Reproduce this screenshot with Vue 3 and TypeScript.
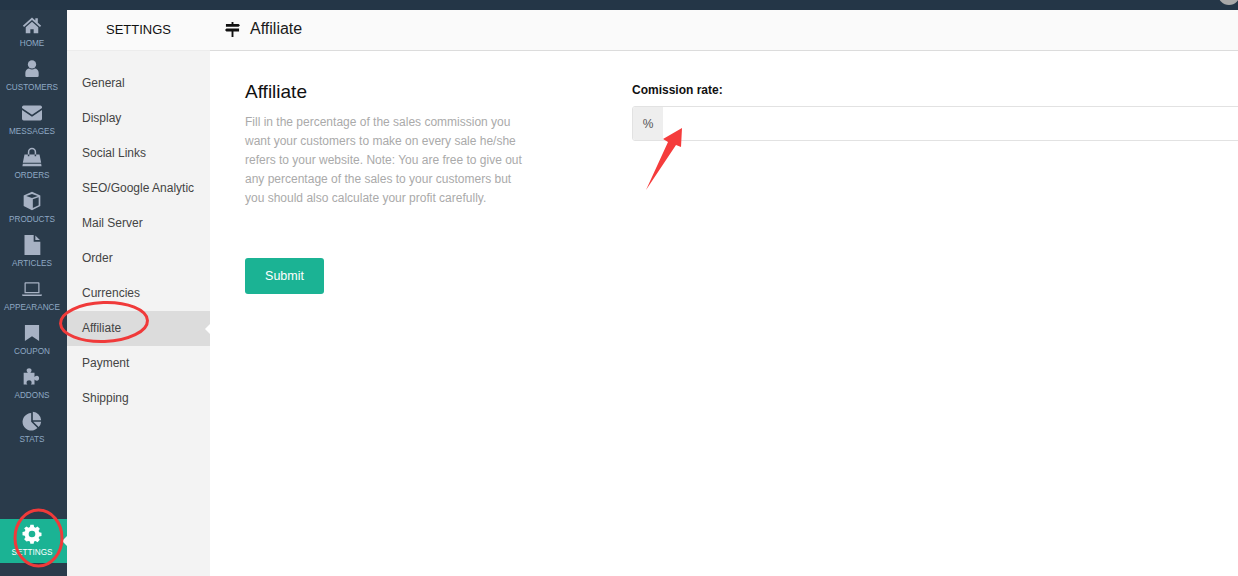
<template>
  <div class="page">
    <div class="topbar"><span class="avatar"></span></div>
    <div class="body">
      <nav class="rail">
        <a v-for="item in railItems" :key="item.label" class="rail-item">
          <svg class="rail-icon" viewBox="0 0 24 24" v-html="item.icon"></svg>
          <span>{{ item.label }}</span>
        </a>
        <a class="rail-item active">
          <svg class="rail-icon" viewBox="0 0 24 24">
            <path fill-rule="evenodd" d="M10 2h4l.5 2.700 1.800.8L18.600 4l2.800 2.800-1.500 2.300.8 1.800 2.700.5v4l-2.700.5-.8 1.800 1.500 2.300-2.800 2.800-2.300-1.500-1.800.8-.5 2.700h-4l-.5-2.700-1.800-.8L5.400 22l-2.800-2.800 1.500-2.300-.8-1.800-2.700-.5v-4l2.700-.5.8-1.800-1.500-2.300L5.400 4l2.300 1.500 1.800-.8zM12 9a4 4 0 1 0 0 8 4 4 0 0 0 0-8z" transform="translate(0 -1)" />
          </svg>
          <span>SETTINGS</span>
        </a>
      </nav>
      <aside class="submenu">
        <div class="submenu-title">SETTINGS</div>
        <ul>
          <li v-for="link in links" :key="link" :class="{ current: link === 'Affiliate' }">{{ link }}</li>
        </ul>
      </aside>
      <main class="content">
        <header class="content-head">
          <svg class="sign-icon" viewBox="0 0 16 16">
            <path d="M7 0h2v2h5.500L16 3.500 14.500 5H1V2h6zM1.500 7H15v3H9v6H7v-6H1.500L0 8.500z" />
          </svg>
          <h1>Affiliate</h1>
        </header>
        <section class="form">
          <div class="intro">
            <h2>Affiliate</h2>
            <p>Fill in the percentage of the sales commission you want your customers to make on every sale he/she refers to your website. Note: You are free to give out any percentage of the sales to your customers but you should also calculate your profit carefully.</p>
            <button type="button">Submit</button>
          </div>
          <div class="field">
            <label>Comission rate:</label>
            <div class="input-group">
              <span class="addon">%</span>
              <input type="text" />
            </div>
          </div>
        </section>
      </main>
    </div>
    <svg class="marks" width="1238" height="576" viewBox="0 0 1238 576">
      <ellipse cx="104" cy="322" rx="43.500" ry="19.500" transform="rotate(-2 104 322)" fill="none" stroke="#f03a3a" stroke-width="3" />
      <ellipse cx="38.500" cy="538" rx="23.500" ry="28" fill="none" stroke="#f03a3a" stroke-width="3" />
      <path d="M646 190 L668 142 L663 139 L682 128 L681 147 L676 145z" fill="#f53c3c" />
    </svg>
  </div>
</template>

<script setup lang="ts">
const railItems: { label: string; icon: string }[] = [
  { label: 'HOME', icon: '<path d="M12 3 1 13l1.500 1.500L12 6l9.500 8.500L23 13l-4-3.600V4h-3v2.700zM12 8l-7.500 6.700V22H10v-5h4v5h5.500v-7.300z"/>' },
  { label: 'CUSTOMERS', icon: '<circle cx="12" cy="6.500" r="5"/><path d="M4 20v-3.500c0-3 2.500-5 4.500-5 2.200 1.400 4.800 1.400 7 0 2 0 4.500 2 4.500 5V20a1.500 1.500 0 0 1-1.500 1.500h-13A1.500 1.500 0 0 1 4 20z"/>' },
  { label: 'MESSAGES', icon: '<path d="M2 3h20a2 2 0 0 1 2 2v1L12 14 0 6V5a2 2 0 0 1 2-2zM0 8.500 12 16.500 24 8.500V19a2 2 0 0 1-2 2H2a2 2 0 0 1-2-2z"/>' },
  { label: 'ORDERS', icon: '<path d="M7 9V6a5 5 0 0 1 10 0v3h-1.800V6a3.200 3.200 0 0 0-6.400 0v3zM3 9h4v2h1.800V9h6.400v2H17V9h4l2 10H1zM1 20h22l.5 3H.5z"/>' },
  { label: 'PRODUCTS', icon: '<path fill-rule="evenodd" d="M12 1 22 5.500V18l-10 5-10-5V5.500zM12 3.500 5 6l7 2.500L19 6zM13 10v10.500l7-3.500V7.500z"/>' },
  { label: 'ARTICLES', icon: '<path d="M3 0h11v8h8v16H3zM16 .5 21.500 6H16z"/>' },
  { label: 'APPEARANCE', icon: '<path fill-rule="evenodd" d="M4 4h16a1 1 0 0 1 1 1v12H3V5a1 1 0 0 1 1-1zM4.500 5.500v10h15v-10zM0 18.500h24v.5a1.500 1.500 0 0 1-1.500 1.500h-21A1.500 1.500 0 0 1 0 19z"/>' },
  { label: 'COUPON', icon: '<path d="M3.500 2.500h17v19L12 16l-8.500 5.500z"/>' },
  { label: 'ADDONS', icon: '<path d="M2 7h5c-1-1-1.500-2-1.500-3C5.500 2.500 7 1.500 8.500 1.500S11.500 2.500 11.500 4c0 1-.5 2-1.500 3h5v5c1-1 2-1.500 3-1.500 1.500 0 2.500 1.500 2.500 3s-1 3-2.500 3c-1 0-2-.5-3-1.500v6h-4.500c1-1 1-2 1-2.500 0-1.500-1.300-2.500-3-2.500s-3 1-3 2.500c0 .5 0 1.500 1 2.500H2z"/>' },
  { label: 'STATS', icon: '<path d="M11 2.500V13l7.500 7.500A10.500 10.500 0 1 1 11 2.500zM13 1a10.500 10.500 0 0 1 10 10H13zM13.500 13H23a10.500 10.500 0 0 1-3 6.300z"/>' }
]

const links: string[] = [
  'General',
  'Display',
  'Social Links',
  'SEO/Google Analytic',
  'Mail Server',
  'Order',
  'Currencies',
  'Affiliate',
  'Payment',
  'Shipping'
]
</script>

<style>
html, body { margin: 0; background: #fff; overflow: hidden; }
</style>

<style scoped>
.page {
  position: relative;
  width: 1238px;
  height: 576px;
  overflow: hidden;
  font-family: "Liberation Sans", Arial, sans-serif;
}

.topbar {
  position: relative;
  height: 10px;
  background: #243647;
}

.avatar {
  position: absolute;
  left: 1218px;
  top: -17px;
  width: 22px;
  height: 22px;
  border-radius: 50%;
  background: #a9a9a9;
}

.body {
  display: flex;
  height: 566px;
}

.rail {
  width: 67px;
  flex: none;
  display: flex;
  flex-direction: column;
  background: #2a3b4b;
}

.rail-item {
  height: 44px;
  flex: none;
  display: flex;
  flex-direction: column;
  align-items: center;
  padding: 5px 3px 0 0;
  box-sizing: border-box;
  color: #8fa9c4;
  font-size: 8.200px;
  line-height: 10px;
  white-space: nowrap;
}

.rail-icon {
  width: 20px;
  height: 20px;
  margin-bottom: 4px;
  flex: none;
  fill: #a7b2c4;
}

.rail-item.active {
  position: relative;
  margin-top: auto;
  margin-bottom: 13px;
  background: #1bb394;
  color: #fff;
}

.rail-item.active .rail-icon { fill: #fff; }

.rail-item.active::after {
  content: "";
  position: absolute;
  right: 0;
  top: 17px;
  border: 5px solid transparent;
  border-right-color: #f3f3f3;
  border-left: 0;
}

.submenu {
  width: 143px;
  flex: none;
  background: #f3f3f3;
  color: #444;
  font-size: 12px;
}

.submenu-title {
  height: 41px;
  display: flex;
  align-items: center;
  justify-content: center;
  padding-bottom: 2px;
  background: #fafafa;
  color: #111;
  font-size: 13px;
  box-sizing: border-box;
  border-bottom: 1px solid #ececec;
}

.submenu ul {
  list-style: none;
  margin: 0;
  padding: 15px 0 0;
}

.submenu li {
  position: relative;
  height: 35px;
  line-height: 35px;
  padding-left: 15px;
}

.submenu li.current { background: #dcdcdc; }

.submenu li.current::after {
  content: "";
  position: absolute;
  right: 0;
  top: 13px;
  border: 5px solid transparent;
  border-right-color: #fff;
  border-left: 0;
}

.content {
  flex: 1;
  min-width: 0;
  background: #fff;
}

.content-head {
  height: 41px;
  box-sizing: border-box;
  display: flex;
  align-items: center;
  gap: 10px;
  padding: 0 0 2px 15px;
  background: #fafafa;
  border-bottom: 1px solid #dcdcdc;
}

.sign-icon {
  width: 15px;
  height: 15px;
  fill: #111;
}

.content-head h1 {
  margin: 0;
  font-size: 16px;
  font-weight: 400;
  color: #1a1a1a;
}

.form {
  display: flex;
  padding: 31px 0 0 35px;
}

.intro {
  width: 280px;
  flex: none;
}

.intro h2 {
  margin: 0 0 11px;
  font-size: 19px;
  line-height: 20px;
  font-weight: 400;
  color: #111;
}

.intro p {
  margin: 0 0 50px;
  font-size: 12px;
  line-height: 19px;
  color: #aaa;
}

.intro button {
  width: 79px;
  height: 36px;
  padding: 0;
  border: 0;
  border-radius: 3px;
  background: #1bb394;
  color: #fff;
  font: 12.500px "Liberation Sans", Arial, sans-serif;
}

.field {
  margin-left: 107px;
  flex: 1;
  margin-right: -10px;
  margin-top: -1px;
}

.field label {
  display: block;
  margin: 2px 0 9px;
  font-size: 12px;
  line-height: 14px;
  font-weight: 700;
  color: #111;
}

.input-group {
  display: flex;
  height: 35px;
  box-sizing: border-box;
  border: 1px solid #e2e2e2;
  border-radius: 3px;
  overflow: hidden;
}

.addon {
  width: 30px;
  flex: none;
  display: flex;
  align-items: center;
  justify-content: center;
  background: #eee;
  color: #555;
  font-size: 12px;
}

.input-group input {
  flex: 1;
  min-width: 0;
  border: 0;
  outline: 0;
  background: #fff;
}

.marks {
  position: absolute;
  left: 0;
  top: 0;
  pointer-events: none;
}
</style>
